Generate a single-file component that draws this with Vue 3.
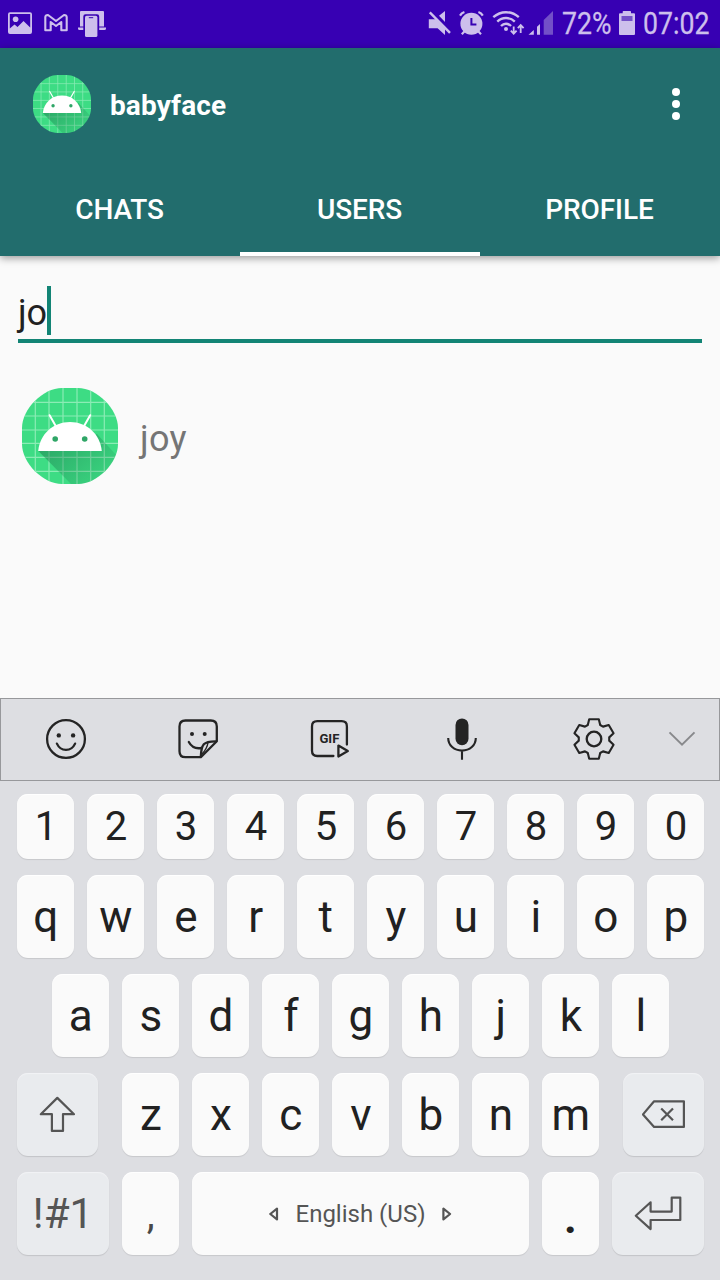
<script setup>
import { ref, computed } from 'vue'

const tabs = ['CHATS', 'USERS', 'PROFILE']
const activeTab = ref('USERS')
const query = ref('jo')
const users = ['joy']

const keyRows = [
  { name: 'digits', keys: '1234567890'.split('') },
  { name: 'top', keys: 'qwertyuiop'.split('') },
  { name: 'home', keys: 'asdfghjkl'.split('') },
]
const bottomLetters = 'zxcvbnm'.split('')

const gridX = [13.3, 27, 41, 55, 68.7, 82.3]
const gridY = [14.3, 28, 42, 55.4, 69.4, 83.3]

const gearPath = computed(() => {
  const tooth = [[-6.2, -14], [-4.8, -19.8], [4.8, -19.8], [6.2, -14]]
  const pts = []
  for (let i = 0; i < 6; i++) {
    const a = (i * Math.PI) / 3
    for (const [x, y] of tooth) {
      pts.push(`${(22 + x * Math.cos(a) - y * Math.sin(a)).toFixed(2)} ${(22 + x * Math.sin(a) + y * Math.cos(a)).toFixed(2)}`)
    }
  }
  return `M${pts.join('L')}Z`
})
</script>

<template>
  <div class="screen">
    <svg class="defs" width="0" height="0">
      <defs>
        <clipPath id="avatarClip"><path d="M40 0H56C75 0 96 21 96 40V56C96 75 75 96 56 96H40C21 96 0 75 0 56V40C0 21 21 0 40 0Z" /></clipPath>
        <linearGradient id="avatarShade" x1="0.1" y1="0.2" x2="0.85" y2="0.75">
          <stop offset="0" stop-color="#1b7a4c" stop-opacity=".52" />
          <stop offset="1" stop-color="#1b7a4c" stop-opacity=".12" />
        </linearGradient>
        <symbol id="avatar" viewBox="0 0 96 96">
          <g clip-path="url(#avatarClip)">
            <rect width="96" height="96" fill="#3ddc84" />
            <path v-for="x in gridX" :key="'x' + x" :d="`M${x} 0V96`" stroke="#8becb5" stroke-width="1.2" />
            <path v-for="y in gridY" :key="'y' + y" :d="`M0 ${y}H96`" stroke="#8becb5" stroke-width="1.2" />
            <path d="M16.3 63L50 97H97V70L75 46Z" fill="url(#avatarShade)" />
          </g>
          <path d="M27.6 27.2L34.3 39M68.2 27.2L61.5 39" stroke="#fff" stroke-width="2" stroke-linecap="round" />
          <path d="M16.2 63C18 46 31 34 48 34S78 46 79.8 63Z" fill="#fff" />
          <circle cx="33.2" cy="51" r="2.8" fill="#2fa667" /><circle cx="62.7" cy="51" r="2.8" fill="#2fa667" />
        </symbol>
      </defs>
    </svg>

    <div class="status">
      <svg width="24" height="48" viewBox="8 0 24 48">
        <path fill-rule="evenodd" d="M10 12.3H30Q32 12.3 32 14.3V32Q32 34 30 34H10Q8 34 8 32V14.3Q8 12.3 10 12.3ZM9.8 14V28.5L14.5 24.5L17.5 27L23.5 21L30.2 27.5V14Z" fill="currentColor" />
        <circle cx="15.6" cy="19.3" r="2.8" fill="currentColor" />
      </svg>
      <svg class="gmail" width="24" height="48" viewBox="44 0 24 48">
        <path d="M45.3 17Q45.5 14.9 48 15L56 21L64 15Q66.5 14.9 66.7 17V30.2H61.3V22L56 26L50.7 22V30.2H45.3Z" fill="none" stroke="currentColor" stroke-width="2.1" stroke-linejoin="round" />
      </svg>
      <svg class="devices" width="28" height="48" viewBox="78 0 28 48">
        <path d="M81 11H103Q104 11 104 12V26.5H99.2V16.5Q99.2 14.2 97 14.2H85.5Q83.3 14.2 83.3 16.5V26.5H80V12Q80 11 81 11ZM78 27.6H83.3V30H79.5Q78 30 78 28.5ZM99.2 27.6H106V28.5Q106 30 104.5 30H99.2Z" fill="currentColor" />
        <rect x="85" y="15.8" width="12.4" height="21.2" rx="1.6" fill="currentColor" />
        <path d="M88.8 17.7H93.2" stroke="#3700b3" stroke-width="1" />
      </svg>

      <svg class="mute" width="23" height="48" viewBox="428 0 23 48">
        <path d="M428.8 19.2H436L445 28.5V35L437.6 28.2H428.8ZM439 15.8L445 11V22Z" fill="currentColor" />
        <path d="M429.8 12.3L450 32.8" stroke="currentColor" stroke-width="2.4" />
      </svg>
      <svg class="alarm" width="25" height="48" viewBox="459 0 25 48">
        <circle cx="471.4" cy="23.7" r="11" fill="currentColor" />
        <path d="M460 15.6Q461.5 13 464.4 12M478.4 12Q481.3 13 482.8 15.6M461.8 34.2L464.8 31M481 34.2L478 31" fill="none" stroke="currentColor" stroke-width="2.2" />
        <path d="M471.4 18V24.4H476.4" fill="none" stroke="#3700b3" stroke-width="2" />
      </svg>
      <svg class="wifi" width="33" height="48" viewBox="492 0 33 48">
        <g fill="none" stroke="currentColor" stroke-width="2.4">
          <path d="M493.3 17.2Q499 12.2 506 12.2T518.8 17.2M497.3 21.6Q501 18 506 18T514.8 21.6M501 26Q503.2 23.7 506 23.7T511 26" />
          <path d="M513.7 26.5V33M510.8 30.6L513.7 33.7L516.6 30.6M520.7 33V25.5M517.8 28.2L520.7 25.1L523.6 28.2" stroke-width="1.8" />
        </g>
        <circle cx="506" cy="29" r="2" fill="currentColor" />
      </svg>
      <svg class="signal" width="25" height="48" viewBox="528 0 25 48">
        <path d="M528.5 34.8L533.8 30V34.8ZM537 34.8V26.7L540 24V34.8Z" fill="currentColor" />
        <path d="M543.7 34.8V20L553 11V34.8Z" fill="#7350c8" />
      </svg>
      <span class="percent">72%</span>
      <svg class="battery" width="16" height="48" viewBox="619 0 16 48">
        <path d="M622.7 13.3V11.8Q622.7 11 623.5 11H630.2Q631 11 631 11.8V13.3H634Q635 13.3 635 14.3V34Q635 35 634 35H620Q619 35 619 34V14.3Q619 13.3 620 13.3Z" fill="currentColor" />
        <rect x="621.5" y="16" width="11" height="5" fill="#7350c8" />
      </svg>
      <span class="clock">07:02</span>
    </div>

    <header class="appbar">
      <div class="title">
        <svg class="me" width="58" height="58"><use href="#avatar" width="58" height="58" /></svg>
        <h1>babyface</h1>
        <svg class="more" width="8" height="32" viewBox="0 0 8 32">
          <circle cx="4" cy="4" r="4" /><circle cx="4" cy="16" r="4" /><circle cx="4" cy="28" r="4" />
        </svg>
      </div>
      <nav class="tabs">
        <div v-for="t in tabs" :key="t" class="tab" :class="{ active: t === activeTab }">{{ t }}</div>
      </nav>
    </header>

    <main class="content">
      <div class="search"><span>{{ query }}</span><i class="caret"></i></div>
      <div v-for="u in users" :key="u" class="user">
        <svg width="96" height="96"><use href="#avatar" width="96" height="96" /></svg>
        <span>{{ u }}</span>
      </div>
    </main>

    <section class="keyboard">
      <div class="tools">
        <svg width="44" height="44" viewBox="0 0 44 44">
          <circle cx="22" cy="22" r="18.9" />
          <path d="M12.9 26.6C14.8 30.8 18 32.8 22 32.8S29.2 30.8 31.1 26.6" stroke-linecap="round" />
          <circle class="solid" cx="14.8" cy="18.4" r="2.2" /><circle class="solid" cx="29.1" cy="18.4" r="2.2" />
        </svg>
        <svg width="44" height="44" viewBox="0 0 44 44">
          <path d="M24.8 40.2H9.5Q3.5 40.2 3.5 34.2V9.5Q3.5 3.5 9.5 3.5H34.8Q40.8 3.5 40.8 9.5V24.3Z" stroke-linejoin="round" />
          <path d="M40.5 24.3C34 24.2 30 24.8 27.8 27.3C25.2 30.3 25 34 24.8 40" />
          <path d="M12.8 25C15.3 29.6 19.5 32 25.4 31" stroke-linecap="round" />
          <path d="M32 25.5Q31.2 31.5 26 37" stroke-width="1.4" />
          <circle class="solid" cx="16" cy="17.1" r="2" /><circle class="solid" cx="28.7" cy="17.1" r="2" />
        </svg>
        <svg width="44" height="44" viewBox="0 0 44 44">
          <path d="M25.4 39H9.2Q4 39 4 33.8V9.4Q4 4.2 9.2 4.2H33.7Q38.9 4.2 38.9 9.4V27.6" stroke-linecap="round" />
          <path d="M30.4 28.6V39.6L39.8 34.1Z" stroke-linejoin="round" />
          <text x="21.4" y="26.4" text-anchor="middle" textLength="20" lengthAdjust="spacingAndGlyphs">GIF</text>
        </svg>
        <svg width="44" height="44" viewBox="0 0 44 44">
          <rect class="solid" x="15.5" y="1.4" width="13" height="26.8" rx="6.5" />
          <path d="M8.2 21C8.2 28.4 14.2 33.6 22 33.6S35.8 28.4 35.8 21M22 33.6V42.7" stroke-width="2.1" />
        </svg>
        <svg width="44" height="44" viewBox="0 0 44 44">
          <path :d="gearPath" stroke-linejoin="round" stroke-width="2.1" /><circle cx="22" cy="22" r="7.3" />
        </svg>
        <svg class="collapse" width="44" height="44" viewBox="0 0 44 44"><path d="M9.5 15.4L22 27.7L34.5 15.4" /></svg>
      </div>

      <div class="keys">
        <div v-for="row in keyRows" :key="row.name" class="row" :class="row.name">
          <div v-for="k in row.keys" :key="k" class="key">{{ k }}</div>
        </div>
        <div class="row shiftrow">
          <div class="key fn">
            <svg width="44" height="44" viewBox="0 0 44 44"><path d="M21.3 4.9L4.8 21.2H15.9V37.9H27V21.2H38Z" /></svg>
          </div>
          <div class="letters">
            <div v-for="k in bottomLetters" :key="k" class="key">{{ k }}</div>
          </div>
          <div class="key fn">
            <svg width="44" height="44" viewBox="0 0 44 44"><path d="M1 21.4L12.1 8.3H41.9V33.9H12.1ZM19.2 15.5L31 27.3M31 15.5L19.2 27.3" /></svg>
          </div>
        </div>
        <div class="row">
          <div class="key fn wide">!#1</div>
          <div class="key comma">,</div>
          <div class="key space">
            <svg width="10" height="14" viewBox="0 0 10 14"><path d="M1.3 7L8 1.6V12.4Z" /></svg>
            <span>English (US)</span>
            <svg width="10" height="14" viewBox="0 0 10 14"><path d="M8.1 7L1.4 1.6V12.4Z" /></svg>
          </div>
          <div class="key period">.</div>
          <div class="key fn wide">
            <svg width="50" height="44" viewBox="0 0 50 44"><path d="M2.8 23.8L17.6 10.3V19.6H38.7V5.6H47.3V28H17.6V37.1Z" /></svg>
          </div>
        </div>
      </div>
    </section>
  </div>
</template>

<style>
body {
  background: #fafafa;
}
</style>

<style scoped>
.screen {
  width: 720px;
  height: 1280px;
  display: flex;
  flex-direction: column;
  overflow: hidden;
  background: #fafafa;
  font-family: Roboto, "Liberation Sans", sans-serif;
  color: #212121;
}
svg {
  display: block;
  flex: none;
}
.defs {
  position: absolute;
}
.status {
  flex: none;
  height: 48px;
  padding-left: 8px;
  display: flex;
  align-items: center;
  background: #3700b3;
  color: #cdbfec;
}
.gmail { margin-left: 12px; }
.devices { margin-left: 10px; }
.mute { margin-left: 322px; }
.alarm { margin-left: 8px; }
.wifi { margin-left: 8px; }
.signal { margin-left: 3px; }
.percent,
.clock {
  font-size: 31px;
  line-height: 48px;
  white-space: nowrap;
  transform-origin: 0 50%;
  transform: scaleX(0.86);
  -webkit-text-stroke: 0.3px currentColor;
}
.percent {
  width: 57px;
  margin-left: 9px;
}
.clock {
  width: 76px;
  margin-left: 8px;
}
.appbar {
  flex: none;
  height: 208px;
  background: #226d6d;
  color: #fff;
  display: flex;
  flex-direction: column;
  box-shadow: 0 2px 8px rgba(0, 0, 0, 0.4);
}
.title {
  height: 112px;
  padding: 0 40px 0 33px;
  display: flex;
  align-items: center;
}
.title h1 {
  flex: 1;
  margin: 2px 0 0 19px;
  font-size: 28px;
  font-weight: 700;
  letter-spacing: 0.1px;
}
.more {
  fill: #fff;
}
.tabs {
  flex: 1;
  display: grid;
  grid-template-columns: repeat(3, 1fr);
}
.tab {
  display: flex;
  align-items: center;
  justify-content: center;
  padding: 6px 1px 0 0;
  border-bottom: 4px solid transparent;
  font-size: 28px;
  font-weight: 500;
  letter-spacing: -0.1px;
}
.tab.active {
  border-color: #fff;
}
.content {
  flex: 1;
  padding: 30px 18px 0;
}
.search {
  display: flex;
  height: 53px;
  border-bottom: 4px solid #128475;
  font-size: 36px;
  line-height: 55px;
}
.caret {
  width: 4px;
  height: 49px;
  background: #128475;
}
.user {
  display: flex;
  align-items: center;
  margin: 45px 0 0 4px;
  font-size: 36px;
  letter-spacing: 0.3px;
  color: #757575;
}
.user span {
  margin: 6px 0 0 22px;
}
.keyboard {
  flex: none;
  height: 582px;
  background: #dddee2;
}
.tools {
  box-sizing: border-box;
  height: 83px;
  padding-bottom: 1px;
  display: grid;
  grid-template-columns: repeat(5, 132px) 44px;
  align-items: center;
  justify-items: center;
  box-shadow: inset 0 0 0 1px #97989b;
}
.tools svg {
  fill: none;
  stroke: #242424;
  stroke-width: 2.3;
}
.tools .solid,
.tools text {
  fill: #242424;
  stroke: none;
}
.tools text {
  font-size: 13.6px;
  font-weight: 700;
}
.tools .collapse {
  stroke: #88898c;
  stroke-width: 2;
}
.keys {
  padding: 13px 16px 0 17px;
  display: flex;
  flex-direction: column;
  gap: 16px;
}
.row,
.letters {
  display: flex;
  gap: 13px;
  height: 83px;
}
.row.digits {
  height: 65px;
}
.digits .key {
  padding: 0 0 0 1px;
  font-size: 40px;
}
.home {
  padding-left: 35px;
}
.row.shiftrow {
  gap: 24px;
}
.key {
  box-sizing: border-box;
  width: 57px;
  height: 100%;
  display: flex;
  align-items: center;
  justify-content: center;
  padding: 1px 0 0 0.6px;
  border-radius: 11px;
  background: #fafafa;
  box-shadow: 0 1px 1px rgba(0, 0, 0, 0.1), inset 0 1px 1px #fff;
  font-size: 44px;
  color: #212121;
}
.fn {
  width: 81px;
  padding: 0;
  background: #e9ebee;
  box-shadow: 0 1px 1px rgba(0, 0, 0, 0.12), inset 0 1px 1px #f2f3f5;
  font-size: 42px;
  color: #555;
}
.key svg {
  fill: none;
  stroke: #555;
  stroke-width: 2.2;
  stroke-linejoin: round;
}
.key.wide {
  width: 92px;
}
.key.comma {
  font-size: 40px;
  color: #484848;
}
.key.period {
  font-weight: 700;
  padding: 8px 0 0;
}
.key.space {
  width: 337px;
  padding: 0;
  gap: 17px;
  font-size: 24px;
  color: #555;
}
</style>
